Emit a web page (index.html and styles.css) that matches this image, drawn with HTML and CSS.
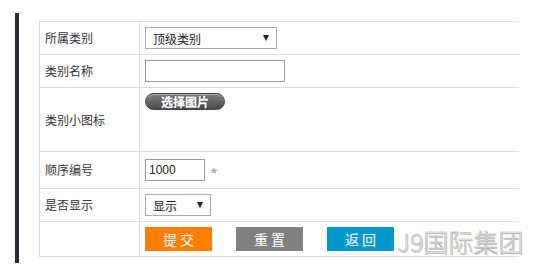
FILE: index.html
```html
<!DOCTYPE html>
<html lang="zh-CN">
<head>
  <meta charset="UTF-8" />
  <title>添加类别</title>
  <link rel="stylesheet" href="styles.css">
</head>
<body>
  <div class="main">
    <table class="form-table">
      <tr class="r1">
        <td class="label">所属类别</td>
        <td>
          <div class="select sel-wide"><span>顶级类别</span><i class="arrow"></i></div>
        </td>
      </tr>
      <tr class="r2">
        <td class="label">类别名称</td>
        <td><input type="text" class="txt txt-name" /></td>
      </tr>
      <tr class="r3">
        <td class="label">类别小图标</td>
        <td class="top"><span class="pick-btn">选择图片</span></td>
      </tr>
      <tr class="r4">
        <td class="label">顺序编号</td>
        <td><input type="text" class="txt txt-num" value="1000" /><span class="star">*</span></td>
      </tr>
      <tr class="r5">
        <td class="label">是否显示</td>
        <td>
          <div class="select sel-small"><span>显示</span><i class="arrow"></i></div>
        </td>
      </tr>
      <tr class="r6">
        <td class="label"></td>
        <td>
          <div class="btns">
            <span class="btn btn-submit">提 交</span>
            <span class="btn btn-reset">重 置</span>
            <span class="btn btn-back">返 回</span>
          </div>
        </td>
      </tr>
    </table>
  </div>
  <div class="watermark">J9国际集团</div>
</body>
</html>
```

FILE: styles.css
```css
body {
  margin: 0;
  padding: 0;
  background: #fff;
  font-family: "Noto Sans CJK SC", "Liberation Sans", sans-serif;
  font-size: 12px;
  color: #333;
}

.main {
  margin: 13px 0 0 15px;
  width: 504px;
  height: 250px;
  box-sizing: border-box;
  border-left: 4px solid #272c33;
  padding: 8px 0 0 20px;
}

.form-table {
  border-collapse: collapse;
  width: 480px;
}

.form-table td {
  border-top: 1px solid #ddd;
  border-bottom: 1px solid #ddd;
  padding: 0 0 0 5px;
  vertical-align: middle;
}

.form-table td.label {
  width: 94px;
  border-left: 1px solid #ddd;
  border-right: 1px solid #ddd;
  line-height: 14px;
}

.form-table td.top {
  vertical-align: top;
  padding-top: 5px;
}

.r1 td { height: 32px; }
.r2 td { height: 32px; }
.r3 td { height: 64px; box-sizing: border-box; }
.r4 td { height: 36px; }
.r5 td { height: 32px; }
.r6 td { height: 34px; }

.select {
  display: flex;
  align-items: center;
  justify-content: space-between;
  box-sizing: border-box;
  height: 22px;
  border: 1px solid #aaa;
  padding: 0 7px 0 7px;
  font-size: 12px;
  color: #222;
}

.sel-wide { width: 132px; }
.sel-small { width: 66px; }

.arrow {
  width: 0;
  height: 0;
  border-left: 3.5px solid transparent;
  border-right: 3.5px solid transparent;
  border-top: 6px solid #222;
}

.txt {
  display: block;
  float: left;
  box-sizing: border-box;
  height: 22px;
  margin: 0;
  border: 1px solid #999;
  padding: 0 3px;
  font-family: "Liberation Sans", sans-serif;
  font-size: 12px;
  color: #222;
  outline: none;
}

.txt-name { width: 140px; }
.txt-num { width: 60px; }

.star {
  float: left;
  margin: 6px 0 0 6px;
  color: #aaa;
  font-family: "Liberation Sans", sans-serif;
  font-weight: bold;
  font-size: 15px;
  line-height: 15px;
}

.pick-btn {
  display: inline-block;
  width: 80px;
  height: 17px;
  box-sizing: border-box;
  border-radius: 9px;
  border: 1px solid #444;
  background: linear-gradient(#808080, #4a4a4a);
  box-shadow: inset 0 1px 0 rgba(255, 255, 255, 0.35);
  color: #fff;
  font-weight: bold;
  font-size: 12px;
  line-height: 15px;
  text-align: center;
  text-shadow: 0 0 1px #111, 0 0 1px #111;
  -webkit-text-stroke: 0.3px #fff;
}

.btns {
  display: flex;
  gap: 24px;
}

.btn {
  display: block;
  width: 67px;
  height: 24px;
  line-height: 24px;
  text-align: center;
  color: #fff;
  font-size: 14px;
}

.btn-submit { background: #ff8000; }
.btn-reset { background: #808080; }
.btn-back { background: #0099cc; }

.watermark {
  position: absolute;
  left: 397px;
  top: 226px;
  font-size: 25px;
  font-weight: 200;
  line-height: 30px;
  color: #f2f2f2;
  -webkit-text-stroke: 0.5px #a8a8a8;
  text-shadow: 1px 1px 0 #d0d0d0;
}
```
